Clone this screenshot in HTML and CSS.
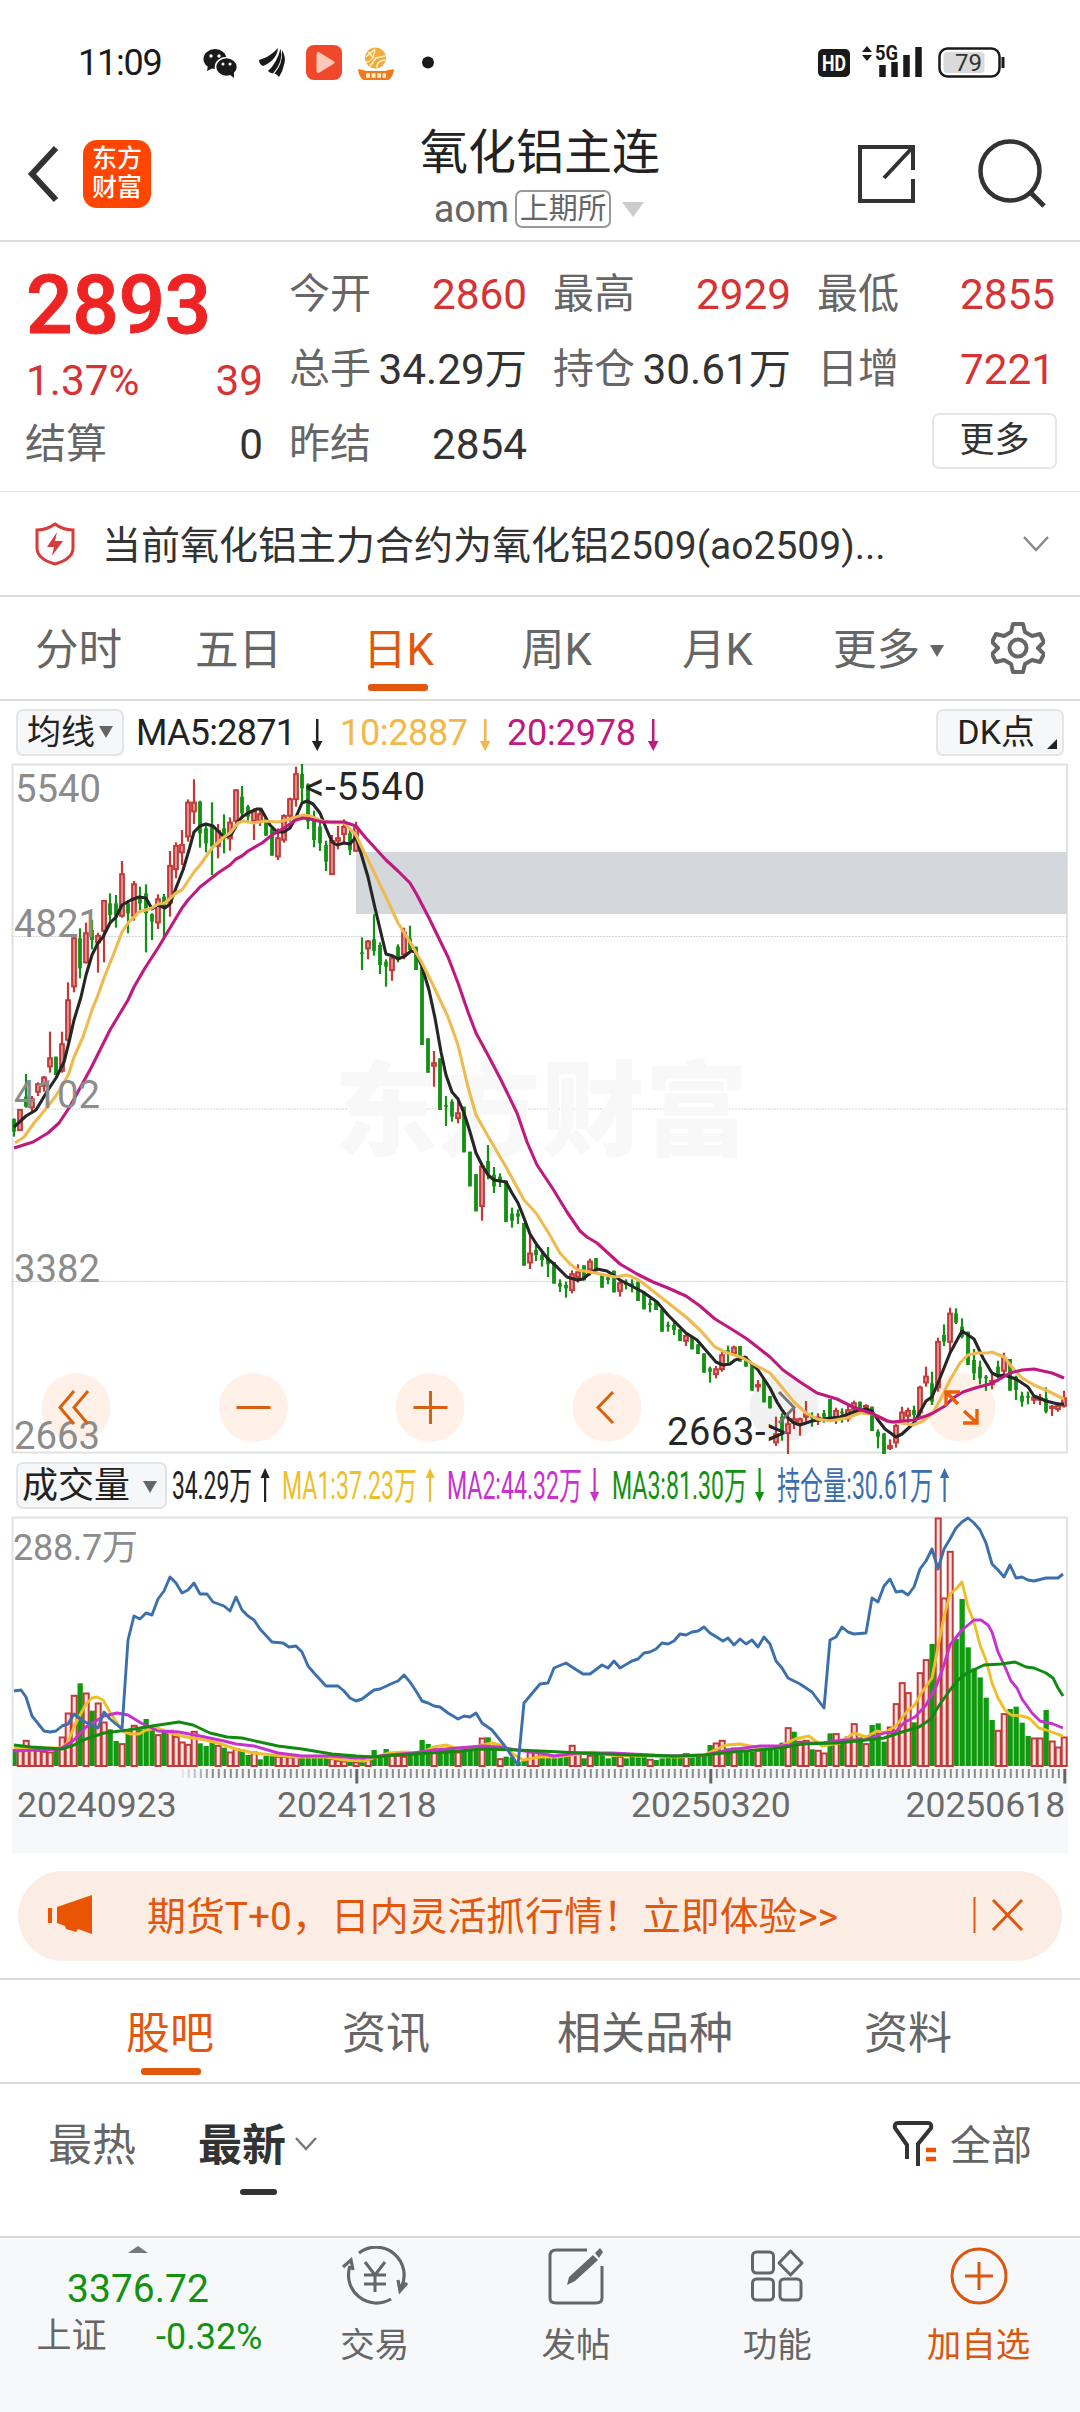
FILE: index.html
```html
<!DOCTYPE html>
<html lang="zh-CN">
<head>
<meta charset="utf-8">
<title>氧化铝主连</title>
<link rel="stylesheet" href="styles.css">
</head>
<body>
<header class="status">
  <span class="clock">11:09</span>
  <svg class="status-left" width="236" height="44" viewBox="200 41 236 44">
    <ellipse cx="215" cy="59" rx="11.5" ry="10"/><path d="M208 65l-1 6 6-3z"/>
    <ellipse cx="226.500" cy="67" rx="11" ry="9.500" stroke="#fff" stroke-width="1.600"/><path d="M229 74l5 4v-6z"/>
    <g fill="#fff"><circle cx="211" cy="56" r="1.700"/><circle cx="219" cy="56" r="1.700"/><circle cx="223" cy="64" r="1.500"/><circle cx="230" cy="64" r="1.500"/></g>
    <path d="M259 60Q270 57 278 48 277 60 263 66 259 64 259 60zM268 71Q277 63 280.500 48.500 284 61 273 73.500 270 73 268 71zM279 77Q277 74 274.500 73.500 283 64 282 50 286 57 284.500 63 283 71 279 77z"/>
    <rect x="306" y="45" width="36" height="35" rx="8" fill="#f1472b"/><path d="M316.500 55q0-4 3-2.500l14 8.500q2 1.500 0 3l-14 8.500q-3 1.500-3-2z" fill="#ffc8b8"/>
    <circle cx="375.500" cy="58" r="10.500" fill="#f0ab3e"/><path d="M366 57l9-8M366 62q7 0 9-12M370 66l6-8 9-2M377 68q-1-7 8-8M368 52l6 6" stroke="#fff0c8" stroke-width="1.400" fill="none"/>
    <path d="M358 69q6 1 8 2h19q3-1 9-2-1 9-6 11h-24q-5-2-6-11z" fill="#f07a18"/><path d="M366 75.500h20" stroke="#ffeccc" stroke-width="4.500" stroke-dasharray="4 1.500"/>
    <circle cx="428" cy="62.500" r="6"/>
  </svg>
  <svg class="status-right" width="190" height="44" viewBox="816 41 190 44">
    <rect x="818" y="49" width="32" height="28" rx="5"/><text x="822" y="71" font-size="22" font-weight="700" fill="#fff" textLength="24" lengthAdjust="spacingAndGlyphs">HD</text>
    <path d="M862 52l5-6 5 6zM862 55l5 6 5-6z"/>
    <path d="M882.500 65v12M894.500 62v15M906.500 55v22M918.500 47v30" stroke="#1a1a1a" stroke-width="6.500" fill="none"/>
    <text x="875" y="60" font-size="21" font-weight="700" textLength="23" lengthAdjust="spacingAndGlyphs">5G</text>
    <rect x="939.500" y="48.500" width="60" height="28" rx="8" fill="#fff" stroke="#1a1a1a" stroke-width="2.500"/><rect x="943.500" y="52" width="41" height="21" rx="4" fill="#dadada"/><path d="M1003 57v11" stroke="#1a1a1a" stroke-width="3"/>
    <text x="955" y="71" font-size="24" fill="#333" textLength="27">79</text>
  </svg>
</header>

<nav class="titlebar">
  <svg class="back" width="34" height="60" viewBox="0 0 34 60"><path d="M30 4L6 30l24 26" fill="none" stroke="#333" stroke-width="6"/></svg>
  <div class="logo">东方<br>财富</div>
  <div class="title">
    <h1>氧化铝主连</h1>
    <div class="code">aom<span class="exchange">上期所</span><i class="tri-down big"></i></div>
  </div>
  <svg class="share" width="60" height="60" viewBox="0 0 60 60"><path d="M36 3H3v54h53V35M56 26V3H36M55 4L27 34" transform="translate(1 0)" fill="none" stroke="#333" stroke-width="4"/></svg>
  <svg class="search" width="72" height="72" viewBox="0 0 72 72"><circle cx="34" cy="34" r="29.500" fill="none" stroke="#333" stroke-width="4.500"/><path d="M54 55l14 14" stroke="#333" stroke-width="5"/></svg>
</nav>

<section class="quote">
  <div class="col">
    <b class="price red">2893</b>
    <p class="change red"><span>1.37%</span><span>39</span></p>
    <p class="last"><em>结算</em><span>0</span></p>
  </div>
  <div class="col">
    <p><em>今开</em><span class="red">2860</span></p>
    <p><em>总手</em><span>34.29万</span></p>
    <p><em>昨结</em><span>2854</span></p>
  </div>
  <div class="col">
    <p><em>最高</em><span class="red">2929</span></p>
    <p><em>持仓</em><span>30.61万</span></p>
  </div>
  <div class="col">
    <p><em>最低</em><span class="red">2855</span></p>
    <p><em>日增</em><span class="red">7221</span></p>
    <button class="more">更多</button>
  </div>
</section>

<section class="notice">
  <svg width="40" height="44" viewBox="0 0 40 44"><path d="M20 2q8 6 18 6v18q0 11-18 16Q2 37 2 26V8Q12 8 20 2z" fill="none" stroke="#d63c3c" stroke-width="3"/><path d="M22 10L12 25h7l-2 9 11-15h-8z" fill="#d63c3c"/></svg>
  <span>当前氧化铝主力合约为氧化铝2509(ao2509)...</span>
  <svg class="chev" width="26" height="18" viewBox="0 0 26 18"><path d="M1 2l12 13L25 2" fill="none" stroke="#888" stroke-width="2.500"/></svg>
</section>

<nav class="periods">
  <span>分时</span><span>五日</span><span class="active">日K</span><span>周K</span><span>月K</span><span>更多<i class="tri-down small"></i></span>
  <svg width="54" height="54" viewBox="0 0 54 54"><path d="M22 3h10l2 8 7 4 8-2 4 8-6 6 6 6-4 8-8-2-7 4-2 8H22l-2-8-7-4-8 2-4-8 6-6-6-6 4-8 8 2 7-4z" fill="none" stroke="#666" stroke-width="4" stroke-linejoin="round"/><circle cx="27" cy="27" r="8.500" fill="none" stroke="#666" stroke-width="4"/></svg>
</nav>

<section class="legend">
  <button class="pill ma">均线<i class="tri-down"></i></button>
  <svg width="540" height="48" viewBox="130 706 540 48" font-size="36">
    <g fill="#222"><text x="136" y="743" textLength="160">MA5:2871</text><path d="M316 717h2.500v22h4l-5.300 10-5.300-10h4z"/></g>
    <g fill="#f2b84b"><text x="340" y="743" textLength="128">10:2887</text><path d="M484 717h2.500v22h4l-5.300 10-5.300-10h4z"/></g>
    <g fill="#bf1a7f"><text x="507" y="743" textLength="129">20:2978</text><path d="M652 717h2.500v22h4l-5.300 10-5.300-10h4z"/></g>
  </svg>
  <button class="pill dk">DK点<i></i></button>
</section>

<svg class="chart" id="kline" width="1080" height="691" viewBox="0 763 1080 691"></svg>

<section class="legend vol">
  <button class="pill volume">成交量<i class="tri-down"></i></button>
  <svg width="790" height="48" viewBox="170 1462 790 48" font-size="38">
    <g fill="#222"><text x="172" y="1500" textLength="80" lengthAdjust="spacingAndGlyphs">34.29万</text><path d="M264 1503h2.200v-24h3.500l-4.600-10-4.600 10h3.500z"/></g>
    <g fill="#efbf2a"><text x="282" y="1500" textLength="135" lengthAdjust="spacingAndGlyphs">MA1:37.23万</text><path d="M429 1503h2.200v-24h3.500l-4.600-10-4.600 10h3.500z"/></g>
    <g fill="#c832cf"><text x="447" y="1500" textLength="135" lengthAdjust="spacingAndGlyphs">MA2:44.32万</text><path d="M593.500 1469h2.200v24h3.500l-4.600 10-4.600-10h3.500z"/></g>
    <g fill="#129112"><text x="612" y="1500" textLength="135" lengthAdjust="spacingAndGlyphs">MA3:81.30万</text><path d="M758.500 1469h2.200v24h3.500l-4.600 10-4.600-10h3.500z"/></g>
    <g fill="#3c70ad"><text x="777" y="1500" textLength="156" lengthAdjust="spacingAndGlyphs">持仓量:30.61万</text><path d="M943.500 1503h2.200v-24h3.500l-4.600-10-4.600 10h3.500z"/></g>
  </svg>
</section>

<svg class="chart" id="volume" width="1080" height="337" viewBox="0 1516 1080 337"></svg>

<aside class="banner">
  <svg width="46" height="40" viewBox="0 0 46 40"><path d="M0 13h4v15H0zM9 12L44 0v39l-14-5-2 3-10-3-1-3-8-3z" fill="#ea5504"/></svg>
  <span>期货T+0，日内灵活抓行情！立即体验&gt;&gt;</span>
  <svg class="close" width="52" height="38" viewBox="0 0 52 38"><path d="M1.500 1v36" stroke="#e2570e" stroke-width="2"/><path d="M20 4l29 30M49 4L20 34" stroke="#e2570e" stroke-width="3"/></svg>
</aside>

<nav class="topics">
  <span class="active">股吧</span><span>资讯</span><span>相关品种</span><span>资料</span>
</nav>

<section class="sort">
  <span class="hot">最热</span><span class="new">最新</span>
  <svg class="chev" width="22" height="14" viewBox="0 0 22 14"><path d="M1 1l10 11L21 1" fill="none" stroke="#777" stroke-width="2.500"/></svg>
  <svg class="funnel" width="46" height="48" viewBox="0 0 46 48"><path d="M15 39V25L3 8Q2 3 6 3h30q4 0 3 5L26 24v22" fill="none" stroke="#333" stroke-width="4"/><path d="M34 30h10M34 39h10" stroke="#ea5504" stroke-width="4.500"/></svg>
  <span class="all">全部</span>
</section>

<footer class="toolbar">
  <div class="index">
    <i class="tri-up"></i>
    <b>3376.72</b>
    <p><span>上证</span><em>-0.32%</em></p>
  </div>
  <div class="tool">
    <svg width="66" height="60" viewBox="0 0 66 60"><path d="M17 7a28 28 0 0 1 42 35M49 53A28 28 0 0 1 8 20M1 21l8-7 2 10M65 37l-7 8-2-11" fill="none" stroke="#666" stroke-width="3.200"/><path d="M23 16l10 13 10-13M33 29v17M22 29h22M22 38h22" fill="none" stroke="#666" stroke-width="3"/></svg>
    <span>交易</span>
  </div>
  <div class="tool">
    <svg width="66" height="60" viewBox="0 0 66 60"><path d="M44 4H13q-6 0-6 6v42q0 5 6 5h40q6 0 6-5V20" fill="none" stroke="#666" stroke-width="3"/><path d="M24 39l2-8L50 9l5 5-23 21zM52 7l5-5 3 4-4 6z" fill="#666"/></svg>
    <span>发帖</span>
  </div>
  <div class="tool">
    <svg width="66" height="60" viewBox="0 0 66 60" fill="none" stroke="#666" stroke-width="3"><rect x="8.500" y="6" width="21" height="21" rx="4"/><rect x="8.500" y="33" width="21" height="21" rx="4"/><rect x="36" y="33" width="21" height="21" rx="4"/><path d="M46.500 5l11.500 12-11.500 12L35 17z" stroke-linejoin="round"/></svg>
    <span>功能</span>
  </div>
  <div class="tool add">
    <svg width="66" height="60" viewBox="0 0 66 60" fill="none" stroke="#d9570f" stroke-width="3"><circle cx="33" cy="30" r="27"/><path d="M33 16v28M19 30h28"/></svg>
    <span>加自选</span>
  </div>
</footer>
<script src="chart.js"></script>
</body>
</html>
```
FILE: styles.css
```css
* { box-sizing: border-box; }
body { margin: 0; width: 1080px; height: 2412px; overflow: hidden; background: #fff; color: #333; font-family: Roboto, "Noto Sans CJK SC", sans-serif; display: flex; flex-direction: column; }
p, h1 { margin: 0; font-weight: 400; }
em, i { font-style: normal; }
svg { display: block; flex: none; }
span { white-space: nowrap; }
button { font: inherit; color: inherit; padding: 0; }
.red { color: #d63434; }

.tri-down { display: inline-block; border: 7px solid transparent; border-top: 12px solid #666; border-bottom: 0; }
.tri-down.big { border-width: 15px 11px 0; border-top-color: #ccc; margin-left: 11px; }
.tri-down.small { border-width: 12px 7px 0; margin-left: 10px; }

.status { height: 110px; flex: none; display: flex; align-items: flex-start; padding: 41px 74px 0 78px; color: #1a1a1a; }
.status svg { fill: #1a1a1a; }
.clock { font-size: 36px; line-height: 44px; width: 122px; letter-spacing: -1.2px; }
.status-right { margin-left: auto; }

.titlebar { height: 132px; flex: none; display: flex; align-items: flex-start; border-bottom: 2px solid #dcdcdc; padding-left: 26px; }
.back { margin-top: 34px; }
.logo { width: 68px; height: 68px; margin: 30px 0 0 23px; border-radius: 14px; background: #ff4500; color: #fff; font-size: 25px; font-weight: 500; line-height: 29px; text-align: center; padding-top: 4px; }
.title { width: 300px; margin: 13px 0 0 239px; text-align: center; }
.title h1 { font-size: 48px; line-height: 60px; color: #222; }
.code { display: flex; align-items: center; justify-content: center; font-size: 38px; line-height: 40px; color: #666; padding: 2px 2px 0 0; height: 50px; letter-spacing: -.2px; }
.exchange { font-size: 29px; line-height: 34px; border: 2px solid #999; border-radius: 7px; padding: 0 3px; margin-left: 6px; }
.share { margin: 34px 0 0 166px; }
.search { margin: 27px 0 0 60px; }

.quote { height: 250px; flex: none; display: grid; grid-template-columns: repeat(4, 237px); column-gap: 27px; padding: 15px 24px 0 26px; border-bottom: 1px solid #e2e2e2; font-size: 42.300px; line-height: 75px; }
.quote p { display: flex; justify-content: space-between; height: 75px; }
.quote em { color: #666; font-size: 41px; margin-left: -1px; }
.price { display: block; font-size: 82px; line-height: 96px; height: 92px; color: #ee2424; font-weight: 500; -webkit-text-stroke: 1px #ee2424; letter-spacing: -.4px; }
.quote .change { height: 58px; line-height: 63px; }
.quote .more { display: block; width: 125px; height: 56px; margin: 6px -2px 0 auto; background: #fff; border: 2px solid #e6e6e6; border-radius: 7px; font-size: 35px; line-height: 52px; }

.notice { height: 105px; flex: none; display: flex; align-items: center; padding: 0 31px 0 35px; border-bottom: 2px solid #dcdcdc; font-size: 39px; }
.notice span { margin: -4px 0 0 27px; }
.chev { margin-left: auto; }

.periods { height: 104px; flex: none; display: grid; grid-template-columns: 160px 168px 158px 161px 151px 158px 54px; padding-left: 35px; border-bottom: 2px solid #dcdcdc; font-size: 43.600px; line-height: 107px; color: #666; }
.periods svg { margin-top: 24px; }
.periods .small { vertical-align: 8px; }
.active { color: #e2570e; position: relative; }
.active::after { content: ""; position: absolute; width: 60px; height: 7px; border-radius: 3px; background: #e2570e; left: 5px; top: 87px; }

.legend { height: 62px; flex: none; display: flex; align-items: center; padding: 0 16px; }
.pill { background: #f6f7f9; border: 2px solid #e2e4e8; border-radius: 7px; height: 47px; color: #222; font-size: 34px; line-height: 42px; flex: none; white-space: nowrap; }
.ma { width: 108px; }
.ma .tri-down { vertical-align: 6px; margin-left: 4px; }
.legend .ma + svg { margin-left: 6px; }
.dk { width: 128px; margin-left: auto; display: flex; justify-content: flex-end; gap: 12px; padding-right: 5px; }
.dk i { align-self: flex-end; margin-bottom: 5px; border: 5.5px solid #222; border-left-color: transparent; border-top-color: transparent; }
.vol { height: 62px; }
.volume { width: 151px; font-size: 36px; text-align: left; padding-left: 4px; margin-right: 3px; line-height: 44px; }
.volume .tri-down { vertical-align: 5px; margin-left: 13px; }
.chart { font-family: Roboto, "Noto Sans CJK SC", sans-serif; }

.banner { height: 90px; flex: none; margin: 18px 18px 17px; border-radius: 45px; background: #fcede4; color: #e2570e; display: flex; align-items: center; padding: 0 37px 0 30px; font-size: 38.900px; }
.banner svg { margin-top: -2px; }
.banner span { margin: -7px 0 0 53px; }
.banner .close { margin-left: auto; }

.topics { height: 106px; flex: none; border-top: 2px solid #dcdcdc; border-bottom: 2px solid #dcdcdc; display: grid; grid-template-columns: 216px 215px 307px 200px; padding-left: 126px; font-size: 44px; line-height: 108px; color: #666; }
.topics .active::after { left: 15px; top: 88px; }

.sort { height: 152px; flex: none; display: flex; align-items: flex-start; padding: 0 48px 0 48px; line-height: 125px; font-size: 44px; color: #666; }
.new { margin-left: 62px; font-weight: 700; color: #333; position: relative; }
.new::after { content: ""; position: absolute; left: 42px; top: 105px; width: 37px; height: 6px; border-radius: 3px; background: #333; }
.sort .chev { margin: 53px 0 0 9px; }
.funnel { margin: 36px 12px 0 auto; }
.all { font-size: 41px; }

.toolbar { height: 176px; flex: none; background: #f7f8fa; border-top: 2px solid #d5d7da; display: flex; padding-left: 34px; }
.index { width: 240px; color: #129112; display: flex; flex-direction: column; align-items: center; padding: 8px 32px 0 0; }
.tri-up { border: 10px solid transparent; border-bottom: 7px solid #777; border-top: 0; }
.index b { font-weight: 400; font-size: 39px; line-height: 46px; margin-top: 13px; }
.index p { display: flex; justify-content: space-between; width: 226px; margin: 0 0 0 23px; font-size: 36px; line-height: 50px; }
.index p span { color: #666; font-size: 35px; }
.tool { width: 201.300px; display: flex; flex-direction: column; align-items: center; font-size: 34.500px; line-height: 50px; color: #666; padding-top: 8px; gap: 14px; }
.add { color: #d9570f; }
```
FILE: chart.js
```js
// Shared geometry: one session every 6px, first session centred on x = 14.
// Vertical values are stored in thirds of a pixel below each pane's origin.
var STEP = 6, FIRST = 14, RED = '#c23a38', GREEN = '#129112';
function el(parent, tag, attrs, text) {
  var n = document.createElementNS('http://www.w3.org/2000/svg', tag);
  for (var k in attrs) n.setAttribute(k, attrs[k]);
  if (text) n.textContent = text;
  parent.appendChild(n);
  return n;
}
function line(svg, pts, color, width) {
  el(svg, 'polyline', { points: pts, fill: 'none', stroke: color, 'stroke-width': width, 'stroke-linejoin': 'round' });
}
function label(svg, x, y, text, color, size, extra) {
  var a = { x: x, y: y, fill: color, 'font-size': size };
  for (var k in extra || {}) a[k] = extra[k];
  el(svg, 'text', a, text);
}

// direction high low bodyTop bodyBottom; the body spans the range when omitted
var early = 'g1105 1160 1107 1145,r1077 1143,g972 1073 1040 1070,r1038 1090 1045 1075,r997 1038 1000 1028,r978 1025 980 1010,r845 968 922 952,g920 975,r845 968 880 965,r697 875 748 872,r562 727 562 712,g535 685 565 655,r518 640 547 640,g510 598 540 570,r548 668 555 580,r450 637 450 545,g430 520 460 495,g435 533 460 500,r333 503 370 500,g450 550 460 490,r393 512 400 500,g410 480 440 460,g403 607 430 490,g490 570 492 515,r433 537 445 520,g432 562 440 475,r303 500 345 460,r277 385 285 360,r240 345 282 310,r148 275 155 262,r88 222 155 187,g152 293 155 250,g225 307 235 280,g157 375 230 290,r222 325 240 290,g193 310 235 265,r202 302 215 268,r118 235 118 215,g108 200 140 190,g165 215 170 200,r175 270 180 215,r180 228 190 215,g205 257,g235 317,r235 330 262 322,r193 278 195 272,r143 215 145 200,r50 170 70 150,g42 155 72 115,g100 237 103 215,g182 292 200 270,g217 303 230 280,g272 363 285 335,r255 375 270 375,r228 298 262 275,r208 283 228 255,g240 315 250 300,r215 305 230 305,g562 660 607 612,r570 628 572 598,g493 617 568 603,g577 672 585 645,g628 710 635 650,r620 692 622 663,g583 637 590 625,r533 628 545 615,g527 605 565 600,g590 660,g650 885,g865 968,r903 1010 937 950,g925 1080,g1038 1128 1065 1070,g1048 1115 1055 1100,r1043 1120 1087 1107,g1070 1207,g1205 1309,g1272 1384,r1240 1412 1247 1371,g1185 1288 1233 1274,g1251 1329 1274 1309,g1270 1311 1280 1290,g1292 1416,g1373 1433 1391 1412,g1378 1422 1390 1400,g1419 1547,r1453 1557 1508 1540,g1481 1533 1500 1515,g1502 1550 1515 1530,g1491 1581 1522 1543,g1536 1601,g1588 1626 1600 1610,g1595 1643 1605 1615,r1561 1630 1570 1623,r1543 1598 1564 1584,g1546 1591,r1526 1577 1532 1561,g1524 1564';
var late = 'g370 413,g375 403 382 390,g362 427,r390 440 397 425,g388 418 395 405,g388 427 400 410,g395 453,g425 478,g447 487 460 465,g455 480,g478 545,g515 545 525 530,g510 555 525 540,g537 573,r548 588 555 575,g560 598,g583 612,g610 668,g650 698 655 665,r648 685 655 675,r605 665 613 660,g587 638 600 610,r587 618 590 612,g588 635,g620 650,g640 722,r690 725 702 712,g688 757,g738 775,r800 888 850 880,g790 872 800 850,r790 912 820 852,r773 837 805 820,r803 857 805 825,r753 815 790 803,g787 830 800 805,r790 825 800 815,g780 818 790 800,g747 805,r773 822 780 812,g775 818 785 790,r768 815 778 808,r752 790 757 782,g755 785,r763 785 765 775,g770 843,g838 895 845 860,g850 912,r868 900 885 897,r815 893 825 880,r770 823 785 815,r773 820 780 800,g767 810 780 795,r707 800 710 790,r650 710 677 700,g665 765 700 755,r563 725 573 715,g523 588 555 575,r473 605 488 578,g475 522 490 518,g505 565 530 560,g545 645,g597 690 630 670,g632 703 650 685,g675 723 680 685,r672 718 690 705,g632 685 650 675,r608 680 622 665,g627 722,g677 750 680 720,g725 770 737 755,g725 763 737 743,r735 762 740 752,r732 765 742 752,g712 790 745 785,r765 798 767 777,r757 785 765 780,r722 773 742 770';

var k = document.getElementById('kline');
el(k, 'path', { d: 'M12.500 1453V764.500H1068', fill: 'none', stroke: '#e2e2e2', 'stroke-width': 2 });
el(k, 'path', { d: 'M12 1452.500H1067V764', fill: 'none', stroke: '#e2e2e2', 'stroke-width': 2 });
el(k, 'path', { d: 'M12 936.500H1068M12 1109H1068M12 1281.500H1068', stroke: '#d4d4d4', 'stroke-width': 1, 'stroke-dasharray': '2 1' });
label(k, 334, 1148, '东方财富', '#f8f8f8', 103, { 'font-weight': 900, textLength: 414, 'font-family': 'Noto Sans CJK SC' });
el(k, 'rect', { x: 356, y: 852, width: 711, height: 62, fill: '#d4d7dc' });
[76, 253.5, 430, 607, 784, 961].forEach(function (x) {
  el(k, 'circle', { cx: x, cy: 1407.5, r: 34.5, fill: x === 784 ? '#f1f1f1' : '#fff0e8' });
});
function candles(list, start, top) {
  list.split(',').forEach(function (s, n) {
    var c = s[0] === 'r' ? RED : GREEN, v = s.slice(1).split(' ').map(function (t) { return top + t / 3; });
    var x = FIRST + (start + n) * STEP, a = v.length > 2 ? v[2] : v[0], b = v.length > 2 ? v[3] : v[1];
    el(k, 'path', { d: 'M' + x + ' ' + v[0] + 'V' + v[1], stroke: c, 'stroke-width': 2.2 });
    if (c === RED) el(k, 'rect', { x: x - 1.9, y: a + 0.9, width: 3.8, height: Math.max(1, b - a - 1.8), fill: '#dc9a98', stroke: RED, 'stroke-width': 2 });
    else el(k, 'rect', { x: x - 1.9, y: a, width: 3.8, height: Math.max(1, b - a), fill: c });
  });
}
candles(early, 0, 750);
candles(late, 98, 1150);

line(k, '14,1127 26,1116 36,1110 48,1090 56,1078 64,1062 69,1042 74,1020 81,997 86,975 92,955 98,943 103,937 110,923 116,917 122,905 131,900 139,897 146,898 152,909 158,905 165,908 170,904 176,888 183,870 189,850 194,832 200,826 206,824 213,826 224,837 231,835 238,822 242,817 248,813 257,809 261,809 270,825 277,832 284,832 290,828 296,817 302,803 307,801 313,804 320,813 326,828 332,842 337,845 344,843 350,844 356,837 360,850 368,877 375,908 386,954 393,956 398,959 405,956 411,951 416,952 422,967 429,990 435,1018 441,1052 446,1075 452,1092 458,1099 464,1113 470,1132 476,1153 482,1165 488,1175 494,1180 506,1182 512,1193 518,1203 524,1218 530,1234 537,1245 548,1259 554,1264 567,1277 577,1280 583,1279 590,1273 597,1269 607,1271 613,1275 620,1280 643,1292 657,1302 668,1315 686,1333 697,1340 716,1362 723,1365 730,1364 735,1360 745,1357 758,1370 770,1388 777,1402 782,1410 788,1418 794,1423 800,1425 812,1421 823,1419 840,1417 854,1412 866,1409 872,1411 878,1420 885,1429 896,1437 902,1434 914,1423 920,1412 926,1401 932,1397 938,1383 944,1368 950,1353 962,1331 974,1339 983,1358 992,1373 998,1376 1004,1375 1016,1379 1028,1387 1034,1396 1046,1401 1058,1404 1064,1404', '#262626', 3.1);
line(k, '15,1143 24,1137 34,1123 45,1110 55,1097 64,1083 69,1073 74,1057 83,1037 92,1010 98,995 104,978 114,953 122,932 128,923 139,912 152,908 158,904 165,903 176,893 182,890 194,872 200,865 212,848 224,837 230,833 238,823 244,821 253,823 265,821 278,822 290,819 303,815 310,816 322,821 334,823 344,823 353,832 356,835 362,848 372,868 386,897 398,923 410,942 422,963 434,987 448,1017 458,1045 468,1087 476,1115 489,1138 506,1167 524,1200 536,1213 548,1232 560,1253 570,1264 578,1270 590,1272 600,1274 615,1277 627,1275 637,1279 643,1283 653,1291 667,1302 686,1317 700,1330 715,1347 725,1352 743,1358 753,1364 770,1373 780,1385 794,1402 806,1413 817,1419 830,1421 847,1418 860,1413 873,1414 882,1418 890,1422 902,1423 913,1425 923,1421 933,1413 940,1400 950,1380 960,1363 968,1355 977,1353 987,1353 992,1352 1004,1357 1012,1367 1022,1378 1034,1385 1050,1392 1064,1399', '#efbb50', 3.1);
line(k, '14,1148 33,1142 48,1133 59,1123 69,1108 79,1090 91,1068 110,1030 122,1010 128,1000 134,987 145,968 158,948 170,928 182,908 188,900 200,887 218,873 230,865 236,859 242,856 248,851 262,843 272,835 284,828 296,820 303,818 310,819 322,822 344,822 356,826 365,837 386,860 398,871 410,883 417,895 429,918 448,957 458,983 468,1012 476,1033 489,1057 501,1080 517,1113 527,1142 537,1165 553,1189 567,1212 580,1231 587,1237 597,1243 620,1264 637,1274 653,1282 668,1288 686,1296 700,1306 715,1319 733,1330 747,1339 770,1357 783,1370 800,1382 817,1393 837,1399 853,1407 873,1414 887,1421 893,1422 903,1421 914,1420 926,1416 933,1413 945,1406 953,1398 963,1392 975,1388 990,1384 998,1380 1010,1373 1022,1370 1034,1369 1052,1373 1064,1378', '#bf1a7f', 3.1);

[[802, '5540', 15], [937, '4821', 14], [1108, '4102', 14], [1282, '3382', 14], [1449, '2663', 14]].forEach(function (t) {
  label(k, t[2], t[0], t[1], '#8c8c8c', 38.3);
});
label(k, 305, 800, '<-5540', '#262626', 38, { textLength: 120 });
label(k, 667, 1445, '2663->', '#262626', 38, { textLength: 119 });
el(k, 'path', { d: 'M74 1391L60 1407.500 74 1424M88 1391L74 1407.500 88 1424M236.500 1407.500H270.500M413.500 1407.500H447.500M430.500 1391V1424M613 1392L598 1407.500 613 1423', fill: 'none', stroke: '#d9600f', 'stroke-width': 3 });
el(k, 'path', { d: 'M779 1392L794 1407.500 779 1423', fill: 'none', stroke: '#777', 'stroke-width': 3 });
el(k, 'path', { d: 'M958 1404L946 1392M946 1406V1392H960M964 1411L977 1423M977 1409V1423H963', fill: 'none', stroke: '#ea5f0a', 'stroke-width': 3.4 });

var bars = 'g897,r897,r870,r895,r900,r903,r905,g900,r860,r788,r735,g700,r728,g782,r758,r815,g838,g873,r880,g842,r825,g838,g807,g840,r853,g845,r840,r858,r875,r882,r843,g880,g888,g878,r885,g893,r905,r895,g898,g915,r905,g928,g918,g915,r918,r918,r920,r918,g920,g920,g920,g920,g918,r925,r930,r932,g935,r935,g915,r928,g900,g918,g897,r915,r915,r918,g912,g915,g870,g882,r895,g898,g895,g893,r905,g905,g890,g890,r863,g862,g897,r925,g920,g922,g935,g928,r905,r905,g915,g918,g920,g918,g915,r885,r910,g925,r915,g912,g915,g925,g920,r918,g925,g920,g922,g918,r927,g930,g925,g922,g920,g920,r910,g922,g920,g915,g885,r878,r870,g895,r893,g903,g903,g905,r900,g900,g900,g900,g878,r832,g845,r873,r870,g898,r900,r908,g850,r850,g870,r860,r820,g862,r880,g825,g820,g875,r830,r760,r697,r727,g817,r667,r628,g582,r203,r443,r303,g567,g447,g592,g655,g682,g743,g810,r840,r790,g777,g770,g818,g858,r863,r863,g780,r872,r890,r860';
var v = document.getElementById('volume');
el(v, 'rect', { x: 12, y: 1767, width: 1056, height: 87, fill: '#f7f8fa' });
el(v, 'path', { d: 'M12.500 1767V1517.500H1067V1767', fill: 'none', stroke: '#e2e2e2', 'stroke-width': 2 });
label(v, 13, 1560, '288.7万', '#8c8c8c', 36, { textLength: 125 });
bars.split(',').forEach(function (s, i) {
  var x = FIRST + i * STEP, y = 1450 + s.slice(1) / 3, left = i ? 2.8 : 1.5;
  if (s[0] === 'r') el(v, 'rect', { x: x - 2.3, y: y + 0.8, width: 5, height: 1765.2 - y, fill: '#f9e6e5', stroke: RED, 'stroke-width': 2 });
  else el(v, 'rect', { x: x - left + .3, y: y, width: left + 2.5, height: 1766 - y, fill: '#0f9a0f' });
});
line(v, '14,1748 50,1748 62,1748 68,1742 74,1727 80,1715 86,1704 92,1698 97,1697 103,1700 110,1712 117,1723 124,1732 131,1734 139,1734 146,1730 158,1728 170,1733 186,1737 200,1739 218,1743 236,1749 254,1753 272,1755 296,1757 326,1757 344,1760 365,1761 379,1756 389,1753 404,1752 420,1753 434,1747 446,1745 455,1748 472,1748 482,1745 492,1743 504,1746 513,1754 523,1760 540,1757 557,1757 592,1752 609,1755 678,1757 704,1755 726,1745 740,1744 760,1748 781,1746 795,1739 809,1736 822,1746 840,1743 854,1733 866,1737 877,1731 884,1733 896,1726 908,1710 914,1706 922,1692 932,1678 938,1647 944,1617 950,1594 956,1589 962,1582 968,1607 974,1622 980,1645 986,1660 992,1683 998,1698 1005,1710 1011,1715 1022,1716 1029,1718 1039,1728 1046,1730 1057,1734 1063,1736', '#efbf2a', 2.9);
line(v, '14,1751 60,1749 65,1746 74,1740 86,1727 104,1716 117,1713 128,1715 141,1723 158,1731 179,1732 200,1736 224,1741 236,1744 254,1746 278,1753 302,1756 332,1756 356,1758 372,1757 389,1755 413,1753 434,1750 470,1747 482,1746 499,1747 517,1750 540,1753 554,1756 578,1753 612,1753 671,1756 705,1755 729,1750 760,1746 781,1746 809,1743 822,1743 843,1740 864,1740 884,1733 895,1732 905,1722 915,1717 926,1705 936,1687 944,1665 950,1645 962,1630 974,1620 981,1620 988,1625 992,1632 998,1652 1005,1667 1011,1681 1017,1688 1022,1699 1032,1713 1040,1721 1053,1724 1063,1728', '#c832cf', 2.9);
line(v, '14,1745 31,1747 62,1749 74,1745 86,1739 104,1733 128,1730 152,1726 179,1722 193,1725 210,1733 227,1737 242,1738 278,1746 302,1749 332,1754 356,1756 375,1757 396,1755 448,1752 482,1749 517,1750 540,1751 581,1753 630,1755 678,1756 705,1755 733,1752 781,1748 802,1744 836,1743 857,1741 884,1738 902,1732 919,1727 931,1719 938,1707 950,1690 958,1680 967,1673 984,1665 1001,1664 1015,1662 1026,1667 1034,1668 1046,1673 1053,1678 1058,1688 1063,1696', '#128a12', 2.9);
line(v, '14,1691 21,1690 26,1697 32,1716 44,1731 50,1732 56,1731 62,1726 68,1724 74,1714 83,1721 98,1728 104,1712 110,1719 122,1729 128,1640 134,1616 140,1619 146,1613 152,1615 158,1599 164,1591 170,1577 176,1583 182,1593 188,1590 194,1583 200,1594 207,1594 213,1602 224,1606 230,1611 236,1597 242,1610 248,1616 254,1620 260,1629 272,1642 283,1643 289,1647 296,1646 302,1652 308,1666 314,1673 326,1686 338,1686 344,1691 350,1698 356,1701 362,1699 374,1690 380,1689 393,1683 398,1681 404,1675 410,1682 416,1691 422,1701 428,1703 434,1706 440,1707 448,1713 458,1719 464,1716 470,1717 476,1713 482,1723 492,1730 504,1745 518,1765 524,1703 540,1684 548,1683 554,1668 566,1663 572,1667 583,1674 590,1674 602,1665 608,1668 614,1661 620,1668 632,1661 638,1659 644,1653 650,1652 656,1649 662,1643 668,1644 674,1641 680,1634 686,1635 692,1632 698,1631 704,1627 710,1633 723,1641 728,1638 734,1645 740,1639 746,1644 752,1640 758,1647 764,1637 770,1644 776,1661 782,1668 788,1678 800,1684 812,1692 824,1708 830,1640 836,1637 842,1627 848,1632 854,1634 866,1633 872,1598 878,1602 884,1586 890,1579 896,1592 902,1591 908,1595 914,1587 920,1569 926,1561 932,1549 938,1569 944,1549 950,1539 956,1528 962,1522 968,1518 974,1523 980,1530 986,1543 992,1564 998,1570 1004,1577 1010,1565 1016,1578 1022,1577 1028,1580 1034,1581 1046,1578 1058,1578 1063,1574', '#3c70ad', 2.9);

// date ruler: fine ticks fade in on the left, long ticks mark dated sessions
for (var i = 0; i < 148; i++) {
  var tx = 182.8 + i * STEP, major = i === 29 || i === 88 || i === 147;
  el(v, 'path', { d: 'M' + tx + ' 1769V' + (major ? 1783.5 : 1778), stroke: major ? '#666' : '#8a8a8a', 'stroke-width': major ? 3 : 2, opacity: Math.min(1, (i + 1) / 6) });
}
[[17, '20240923'], [277, '20241218'], [631, '20250320'], [905.5, '20250618']].forEach(function (t) {
  label(v, t[0], 1817, t[1], '#6b6b6b', 35.5);
});
```
